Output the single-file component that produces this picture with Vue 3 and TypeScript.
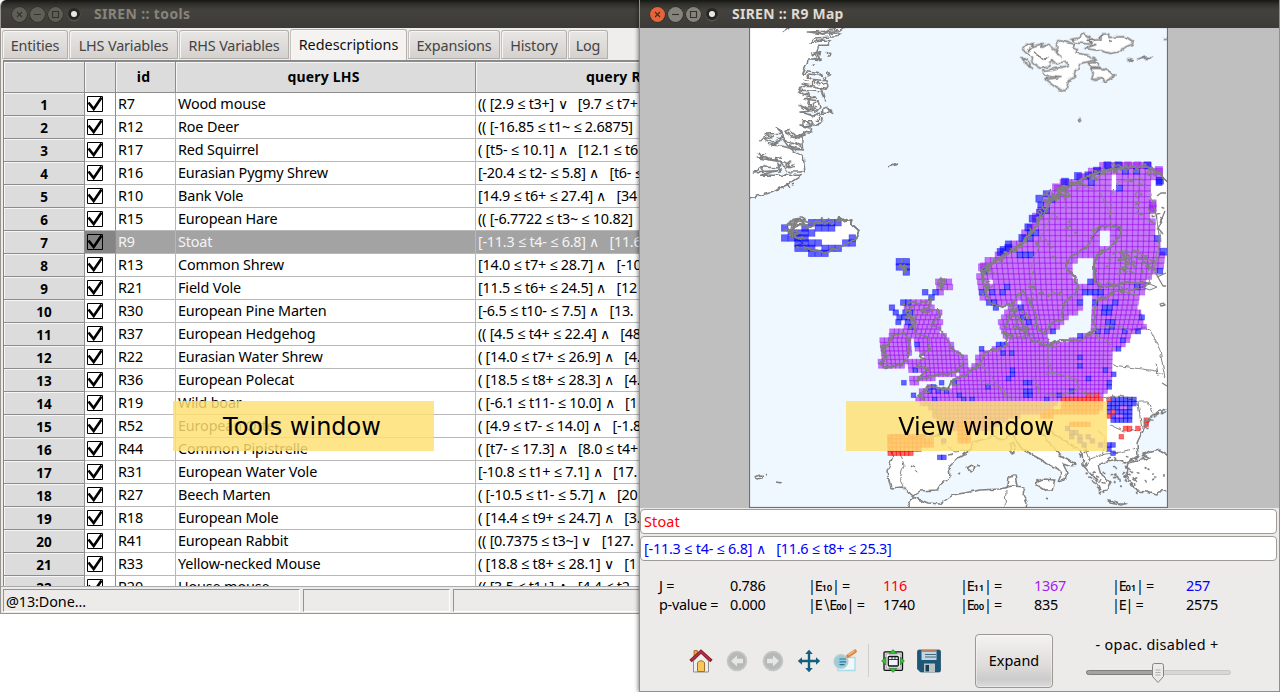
<script setup lang="ts">
type Pt = [number, number]
type Kind = 'p' | 'b' | 'r'
interface Cell { x: number; y: number; s: number; k: Kind }

const tabs = [
  { t: 'Entities', w: 66 }, { t: 'LHS Variables', w: 109 }, { t: 'RHS Variables', w: 110 },
  { t: 'Redescriptions', w: 117, on: true }, { t: 'Expansions', w: 92 }, { t: 'History', w: 66 }, { t: 'Log', w: 40 },
]

const rows: [string, string, string][] = [
  ['R7', 'Wood mouse', '(( [2.9 ≤ t3+] ∨   [9.7 ≤ t7+'],
  ['R12', 'Roe Deer', '(( [-16.85 ≤ t1~ ≤ 2.6875]'],
  ['R17', 'Red Squirrel', '( [t5- ≤ 10.1] ∧   [12.1 ≤ t6'],
  ['R16', 'Eurasian Pygmy Shrew', '[-20.4 ≤ t2- ≤ 5.8] ∧   [t6- ≤'],
  ['R10', 'Bank Vole', '[14.9 ≤ t6+ ≤ 27.4] ∧   [34'],
  ['R15', 'European Hare', '(( [-6.7722 ≤ t3~ ≤ 10.82]'],
  ['R9', 'Stoat', '[-11.3 ≤ t4- ≤ 6.8] ∧   [11.6'],
  ['R13', 'Common Shrew', '[14.0 ≤ t7+ ≤ 28.7] ∧   [-10'],
  ['R21', 'Field Vole', '[11.5 ≤ t6+ ≤ 24.5] ∧   [12'],
  ['R30', 'European Pine Marten', '[-6.5 ≤ t10- ≤ 7.5] ∧   [13.'],
  ['R37', 'European Hedgehog', '(( [4.5 ≤ t4+ ≤ 22.4] ∧   [48'],
  ['R22', 'Eurasian Water Shrew', '( [14.0 ≤ t7+ ≤ 26.9] ∧   [4.'],
  ['R36', 'European Polecat', '( [18.5 ≤ t8+ ≤ 28.3] ∧   [4.'],
  ['R19', 'Wild boar', '( [-6.1 ≤ t11- ≤ 10.0] ∧   [1'],
  ['R52', 'European Otter', '( [4.9 ≤ t7- ≤ 14.0] ∧   [-1.8'],
  ['R44', 'Common Pipistrelle', '( [t7- ≤ 17.3] ∧   [8.0 ≤ t4+'],
  ['R31', 'European Water Vole', '[-10.8 ≤ t1+ ≤ 7.1] ∧   [17.'],
  ['R27', 'Beech Marten', '( [-10.5 ≤ t1- ≤ 5.7] ∧   [20'],
  ['R18', 'European Mole', '( [14.4 ≤ t9+ ≤ 24.7] ∧   [3.'],
  ['R41', 'European Rabbit', '(( [0.7375 ≤ t3~] ∨   [127.'],
  ['R33', 'Yellow-necked Mouse', '( [18.8 ≤ t8+ ≤ 28.1] ∨   [1'],
  ['R20', 'House mouse', '(( [3.5 ≤ t1+] ∧   [4.4 ≤ t2'],
]

const rhsQuery = '[-11.3 ≤ t4- ≤ 6.8] ∧   [11.6 ≤ t8+ ≤ 25.3]'

// --- Map grid: squares shrink towards the south -------------------------
const stops: Pt[] = [[155, 5.7], [250, 5.5], [300, 5.1], [340, 4.3], [400, 4.15], [510, 4.1]]
function pitch(y: number): number {
  for (let i = 1; i < stops.length; i++) {
    if (y <= stops[i][0]) {
      const [a, p] = stops[i - 1], [b, q] = stops[i]
      return p + (q - p) * (y - a) / (b - a)
    }
  }
  return 4.1
}
function flat(ox: number, oy: number, s: number, a: number[]): Pt[] {
  const out: Pt[] = []
  for (let i = 0; i < a.length; i += 2) out.push([ox + a[i] / s, oy + a[i + 1] / s])
  return out
}
function inside(x: number, y: number, poly: Pt[]): boolean {
  let c = false
  for (let i = 0, j = poly.length - 1; i < poly.length; j = i++) {
    const [xi, yi] = poly[i], [xj, yj] = poly[j]
    if ((yi > y) !== (yj > y) && x < (xj - xi) * (y - yi) / (yj - yi) + xi) c = !c
  }
  return c
}

const purple: Pt[][] = [
  flat(0, 0, 1, [1108,163,1148,163,1150,168,1163,170,1163,178,1152,180,1149,192,1150,200,1157,200,1157,212,1149,215,1153,218,1153,234,1158,237,1158,247,1163,250,1163,263,1158,273,1152,278,1145,283,1145,296,1138,298,1138,312,1145,314,1145,328,1138,329,1133,333,1128,340,1123,348,1113,350,1113,375,1112,387,1107,392,1098,397,1070,397,1060,402,1045,412,1010,418,985,432,950,430,936,420,930,408,918,402,918,394,930,383,940,390,955,386,957,378,975,362,982,350,1005,347,1007,340,1000,332,1000,317,1007,308,1020,303,1020,301,1003,308,988,303,980,297,979,265,993,255,1007,245,1022,237,1034,215,1044,208,1046,193,1060,183,1077,176,1093,170]),
  flat(860, 240, 3, [160,180,215,180,215,205,245,205,245,250,235,255,245,280,270,305,285,320,290,335,320,350,320,375,300,400,240,410,150,435,150,418,190,400,150,390,150,360,190,355,165,325,165,290,135,275,130,230,130,190]),
  flat(860, 240, 3, [90,270,150,270,150,345,145,360,120,390,60,385,52,375,52,355,75,350,60,340,60,295,90,290]),
  flat(860, 240, 3, [232,110,270,110,270,145,250,160,230,155]),
]
const holes: Pt[][] = [
  flat(960, 150, 3, [415,243,458,243,458,280,435,290,415,285]),
  flat(960, 150, 3, [335,345,358,345,358,320,397,320,397,395,370,400,335,392]),
  flat(960, 150, 3, [450,75,470,75,470,115,450,115]),
  flat(0, 0, 1, [1083,294,1094,293,1092,333,1080,337,1062,342,1045,341,1052,332,1062,325,1068,318,1078,311,1084,305]),
  flat(860, 240, 3, [384,110,396,110,396,135,384,135]),
  flat(860, 240, 3, [150,300,165,325,165,352,150,352]),
]
const blueArea = [flat(1000, 300, 3, [320,288,415,288,400,325,400,370,345,370,320,355])]
const redArea = [
  flat(740, 380, 3, [446,165,560,170,590,190,520,212,510,230,446,230]),
  flat(1000, 300, 3, [185,286,310,286,300,340,120,350,130,335,180,330]),
  flat(1000, 300, 3, [205,370,275,370,275,382,205,382]),
  flat(740, 380, 3, [650,130,690,130,690,190,650,190]),
]
const blueDots: Pt[] = [
  ...flat(860, 240, 3, [96,203,130,190,145,190,110,212,130,212,145,215,115,228,130,232,115,245,140,250,150,258,200,160,220,160,218,175,168,318,172,390,136,428,162,463,215,438,245,425,205,450,230,450,280,425,262,452,230,475,295,462,312,474,338,475,370,330,412,318,430,318,425,335,460,340,458,395,458,408,448,415,390,440,505,428,505,455,503,465,388,190,410,205,478,200,495,225,505,240,440,148,425,162,368,95,368,155,425,35,440,20,480,50,500,50]),
  ...flat(960, 150, 3, [500,58,530,60,400,90,480,110,600,98,262,125,238,160,280,150,260,190,210,245,230,250,210,262,185,322,205,322,70,365,70,420,90,430,125,432,145,418,95,462,110,475,178,470,195,495,385,390,370,420,390,420,410,420,425,422,528,412,405,458,355,458,430,475,455,475,445,490,440,515,455,525,545,498,592,262,592,365]),
  ...flat(1000, 300, 3, [58,20,75,48,88,62,165,100,238,110,235,8,285,10,310,22,330,25,345,15,320,35,425,48,320,62,335,70,300,88,320,88,372,88,408,90,375,125,360,140,8,135,8,160,40,165,240,175,240,200,268,235,310,215,347,222,328,250,328,262,40,212,40,225,30,235,82,248,82,272,92,280,135,295,175,285,215,270,332,432,345,432,332,445,343,455,200,390,215,400,230,400,245,405,220,415,240,420,262,415,275,420,250,430,307,432]),
  ...flat(740, 380, 3, [600,235,613,235,615,185]),
]
const redDots: Pt[] = [
  ...flat(1000, 300, 3, [260,285,285,285,322,293,380,387,392,387,418,387,367,408,443,365,443,377,337,340,325,352]),
  ...flat(740, 380, 3, [540,213]),
]
const extraPurple: Pt[] = flat(1000, 300, 3, [370,320,383,325,355,347,370,342])

function near(x: number, y: number, p: number, list: Pt[]): boolean {
  return list.some(([a, b]) => Math.abs(a - x) <= p / 2 && Math.abs(b - y) <= p / 2)
}
const cells: Cell[] = []
for (let y = 165.5; y < 500; y += pitch(y)) {
  const p = pitch(y)
  for (let i = Math.floor(-210 / p); 1080 + i * p < 1164; i++) {
    const x = 1080 + i * p
    let k: Kind | '' = ''
    if (purple.some(q => inside(x, y, q)) && !holes.some(q => inside(x, y, q))) k = 'p'
    if (blueArea.some(q => inside(x, y, q))) k = 'b'
    if (redArea.some(q => inside(x, y, q))) k = 'r'
    if (near(x, y, p, extraPurple)) k = 'p'
    if (near(x, y, p, blueDots)) k = 'b'
    if (near(x, y, p, redDots)) k = 'r'
    if (k) cells.push({ x, y, s: p + 0.5, k })
  }
}
const iceland: [number, number[]][] = [
  [608, [215, 235, 255, 275, 294]], [624, [134, 195, 235, 255, 275]], [639, [154, 174, 195, 215]],
  [654, [134, 154, 174, 195, 337]], [669, [174, 195, 215, 235, 317, 337]], [685, [174, 195, 215, 255, 275, 295]],
  [700, [215, 235, 255]],
]
for (const [y, xs] of iceland) for (const x of xs) cells.push({ x: 740 + x / 3, y: 20 + y / 3, s: 6.5, k: 'b' })
for (const [x, y] of flat(860, 240, 3, [118,65,139,65,118,81,139,81,139,96])) cells.push({ x, y, s: 6.5, k: 'b' })
// larger squares along the Arctic coast
for (const [x, y] of flat(960, 150, 3, [442,46,475,46,562,46,411,62,354,78,385,76,315,95,600,92,238,146,187,264,145,294,122,306,205,232,240,188,218,206,610,305]))
  cells.push({ x, y, s: 7, k: 'b' })
for (const [x, y] of flat(960, 150, 3, [504,46,533,46,597,60,288,112,578,160,578,176,66,352])) cells.push({ x, y, s: 7, k: 'p' })

const kinds: Kind[] = ['p', 'b', 'r']
const groups = kinds.map(k => ({ k, list: cells.filter(c => c.k === k) }))

// --- Rugged coast: short jittered strokes around fjord and archipelago areas
let seed = 11
function rnd(): number { seed = (seed * 16807) % 2147483647; return seed / 2147483647 }
function scribble(line: number[], spread: number, n: number, len = 5): string {
  const pts = flat(0, 0, 1, line)
  let d = ''
  for (let i = 0; i < pts.length - 1; i++) {
    for (let j = 0; j < n; j++) {
      const t = rnd()
      let x = pts[i][0] + (pts[i + 1][0] - pts[i][0]) * t + (rnd() - .5) * spread
      let y = pts[i][1] + (pts[i + 1][1] - pts[i][1]) * t + (rnd() - .5) * spread
      d += `M${x.toFixed(1)} ${y.toFixed(1)}`
      for (let m = 0; m < 3; m++) {
        x += (rnd() - .5) * len; y += (rnd() - .5) * len * .8
        d += `L${x.toFixed(1)} ${y.toFixed(1)}`
      }
    }
  }
  return d
}
const rough = [
  scribble([1160,174,1140,166,1120,168,1103,172,1085,179,1070,185,1058,192], 7, 14),
  scribble([1060,188,1050,200,1042,212,1035,228,1022,244,1008,254], 3, 12),
  scribble([1070,195,1044,197], 9, 26),
  scribble([1005,256,990,264,984,275], 4, 12),
  scribble([985,270,987,293], 7, 24),
  scribble([1115,255,1150,258], 10, 18, 7),
  scribble([1112,266,1155,266], 16, 50, 5),
  scribble([1135,180,1140,220], 8, 8, 6),
  scribble([1150,225,1163,205], 10, 9),
  scribble([908,308,914,326], 9, 26),
  scribble([882,345,886,366], 4, 8),
  scribble([903,262,905,272], 3, 6),
  scribble([940,281,943,286], 4, 8),
  scribble([1013,325,1032,330], 24, 34, 5),
  scribble([1005,315,1015,312], 10, 12),
  scribble([1100,286,1145,283], 4, 9),
  scribble([1088,470,1100,490], 10, 14, 4),
  scribble([1106,464,1128,484], 18, 20, 4),
  scribble([1127,465,1135,490], 9, 15, 4),
  scribble([1128,458,1150,455], 5, 12, 4),
  scribble([1145,425,1150,418,1166,409], 4, 9, 4),
  scribble([1082,448,1086,468], 5, 10, 4),
  scribble([1140,470,1165,480], 16, 9, 3),
  scribble([1060,215,1075,235], 16, 7, 5),
  scribble([1035,240,1055,258], 14, 7, 5),
  scribble([1020,290,1055,296], 16, 14, 6),
  scribble([1042,342,1060,345], 5, 8, 4),
  scribble([920,395,960,382], 5, 8, 4),
  scribble([788,224,806,222], 10, 16, 6),
  scribble([790,234,804,238], 8, 10, 6),
  scribble([810,222,836,220], 4, 10, 5),
].join('')
const fjords = [
  scribble([812,30,836,32], 7, 5, 8),
  scribble([818,50,806,74], 4, 4, 6),
  scribble([806,80,822,84], 6, 6, 7),
  scribble([800,92,815,112], 8, 8, 8),
  scribble([804,118,822,120], 8, 5, 8),
  scribble([770,138,800,140], 12, 10, 9),
  scribble([760,158,802,168], 12, 10, 9),
  scribble([776,192,800,178], 2, 6, 4),
  scribble([1028,48,1050,66], 8, 5, 6),
  scribble([1080,38,1120,42], 4, 5, 5),
].join('')
</script>

<template>
  <div class="desk">
    <section class="win tools">
      <header class="title dim">
        <i class="btn"><svg viewBox="0 0 15 15"><path d="M5 5l5 5M10 5l-5 5" /></svg></i>
        <i class="btn"><svg viewBox="0 0 15 15"><path d="M4 7.5h7" /></svg></i>
        <i class="btn"><svg viewBox="0 0 15 15"><path d="M4.5 4.5h6v6h-6z" /></svg></i>
        <i class="dot"></i>
        <span>SIREN :: tools</span>
      </header>
      <nav class="tabs">
        <div v-for="t in tabs" :key="t.t" class="tab" :class="{ on: t.on }" :style="{ width: t.w + 'px' }"><span>{{ t.t }}</span></div>
      </nav>
      <div class="grid">
        <div class="row head"><b></b><b></b><b>id</b><b>query LHS</b><b class="last">query RHS</b></div>
        <div v-for="(r, i) in rows" :key="r[0]" class="row" :class="{ sel: i === 6 }">
          <b>{{ i + 1 }}</b>
          <div class="ck"><svg viewBox="0 0 16 16"><path d="M.5 .5h15v15H.5z" /><path class="tk" d="M1.5 6.5l5.2 6.500L14.500 1.500" /></svg></div>
          <div>{{ r[0] }}</div><div>{{ r[1] }}</div><div class="q">{{ r[2] }}</div>
        </div>
      </div>
      <footer class="status"><div>@13:Done...</div><div></div><div></div></footer>
    </section>

    <section class="win view">
      <header class="title">
        <i class="btn x"><svg viewBox="0 0 15 15"><path d="M5 5l5 5M10 5l-5 5" /></svg></i>
        <i class="btn"><svg viewBox="0 0 15 15"><path d="M4 7.5h7" /></svg></i>
        <i class="btn"><svg viewBox="0 0 15 15"><path d="M4.5 4.5h6v6h-6z" /></svg></i>
        <i class="dot"></i>
        <span>SIREN :: R9 Map</span>
      </header>
      <div class="canvas">
        <svg class="map" viewBox="749 28 419 480">
          <defs>
            <filter id="rugged" filterUnits="userSpaceOnUse" x="740" y="20" width="440" height="500" color-interpolation-filters="sRGB">
              <feTurbulence type="fractalNoise" baseFrequency=".2" numOctaves="1" seed="4" />
              <feDisplacementMap in="SourceGraphic" scale="5" xChannelSelector="R" yChannelSelector="G" />
            </filter>
          </defs>
          <rect x="749" y="28" width="419" height="480" fill="#eff7ff" />
          <g class="land" filter="url(#rugged)">
            <g transform="translate(740 20) scale(.33333)">
              <path d="M10 10L320 10L312 24L300 32L205 36L250 42L304 38L290 50L222 54L210 68L240 60L275 62L262 76L235 76L230 100L238 110L230 118L204 116L202 130L196 140L185 165L192 166L200 152L240 158L245 166L205 162L205 172L215 178L258 182L264 198L258 208L220 200L186 192L220 202L180 205L174 212L190 222L228 232L190 236L232 242L240 262L230 274L208 268L180 256L210 274L180 276L210 284L230 285L250 295L245 308L215 318L180 315L218 327L212 340L190 335L195 346L170 348L145 328L135 334L160 350L185 354L188 390L165 388L140 370L120 330L106 322L125 340L75 342L100 352L72 356L95 366L120 362L96 376L125 378L150 385L190 410L194 452L185 456L145 455L120 424L90 418L55 400L72 412L55 414L112 424L118 444L60 440L40 456L110 452L62 466L184 466L145 492L100 516L30 534L10 538z" />
              <path d="M160 598L180 596L200 625L230 608L260 612L280 600L296 605L300 592L318 604L338 600L335 612L357 632L345 660L320 670L290 685L250 697L225 690L200 686L168 680L190 668L150 650L185 640L138 630L165 622L150 608z" />
              <path d="M178 210l20 -14 28 2 22 12 9 30 -10 -24zM248 266l14 -4 10 10 -12 8 -12 0zM268 272l12 6M262 100l10 0 0 8 -8 0zM262 160l8 -2 2 6 -8 4zM446 440l24 -11 0 5zM190 302l25 0 3 12 -30 4zM132 362l48 10 4 16 -40 -10zM128 38l20 -14M232 96l10 2 -2 6zM230 114l10 2 0 6z" />
            </g>
            <g transform="translate(960 20) scale(.33333)">
              <path d="M200 75L220 70L214 80L250 70L244 82L265 72L280 84L300 112L290 86L290 65L305 62L345 74L336 84L352 88L348 98L385 106L410 120L370 128L356 132L360 145L345 152L342 175L325 182L318 212L295 208L255 178L300 172L254 168L248 152L285 146L325 136L316 124L288 132L275 118L270 138L240 145L215 125L218 112L195 96L188 86z" />
              <path d="M332 58L355 54L370 41L390 50L385 60L425 60L428 42L446 42L446 52L490 50L520 62L518 72L498 80L480 94L450 100L420 92L375 85L410 74L345 68zM395 145L425 145L440 152L465 165L452 176L432 185L430 176L395 178L400 160zM385 130L405 127L422 142L392 140zM185 112L205 125L217 144L195 130zM506 118l12 4 -4 4zM536 116l20 -5 18 3 -18 1zM352 302l6 -5 4 5 -5 4zM610 58l14 0" />
            </g>
            <path d="M1178 186L1168 182L1158 172L1145 166L1120 168L1100 171L1080 180L1067 188L1055 197L1045 212L1035 228L1020 245L1005 255L990 264L983 275L986 295L993 304L1002 307L1013 304L1022 290L1029 300L1036 315L1038 330L1045 334L1050 323L1062 320L1064 303L1078 290L1074 276L1066 268L1069 258L1085 248L1092 240L1100 227L1116 226L1122 233L1110 248L1097 255L1094 265L1097 285L1105 287L1130 282L1150 283L1140 288L1115 292L1098 300L1094 312L1095 330L1080 341L1060 340L1048 346L1032 341L1024 330L1020 318L1010 316L1004 330L1008 345L995 350L985 352L980 364L965 376L952 380L948 390L930 386L918 396L930 404L942 420L940 436L890 436L888 446L893 456L887 472L891 488L903 487L913 496L920 491L937 490L941 484L950 477L949 467L958 458L970 451L973 442L993 437L1003 440L1012 433L1018 443L1025 451L1040 459L1050 465L1058 469L1062 473L1058 482L1064 480L1067 472L1063 464L1072 467L1075 463L1060 455L1048 441L1040 430L1046 425L1055 435L1070 445L1082 452L1083 465L1088 471L1096 480L1100 492L1107 490L1110 482L1101 475L1098 465L1107 462L1117 460L1125 463L1138 456L1137 443L1143 430L1150 418L1160 410L1178 409z" />
            <path d="M1178 455L1168 455L1160 450L1143 454L1150 458L1128 463L1127 467L1126 478L1131 482L1137 491L1147 492L1157 495L1159 491L1178 490zM1008 478l7 -3 2 11 -3 7 -6 1 -1 -8zM1010 444l4 -1 1 10 -4 1zM1035 482l8 -3 12 1 -3 11 -5 0 -10 -6zM1109 500l10 3 8 0 -6 2 -11 -2zM755 477l6 -2 2 2 -5 2zM766 475l2 1M776 482l5 1M967 468l5 -3 3 3 -4 3zM976 465l4 1M958 473l2 1M911 466l4 2M915 470l3 2M948 455l5 -1M1046 497l2 1" />
            <path d="M903 518L910 502L913 497L928 503L940 504L953 495L980 490L1000 489L1013 486L1025 487L1023 495L1027 502L1025 518z" />
            <g transform="translate(860 240) scale(.33333)">
              <path d="M150 185L185 190L215 180L205 200L183 215L235 210L240 225L215 255L235 262L255 290L275 325L305 345L310 365L300 385L265 402L210 406L165 425L190 400L207 388L170 378L192 355L182 345L210 330L205 295L180 285L165 275L160 240L140 220L135 200zM95 285L130 280L148 300L145 350L125 372L75 385L60 370L80 350L65 320L85 315z" />
            </g>
            <path class="fine" :d="fjords" />
          </g>
          <path class="lake" d="M1141 287l9 -3 7 3 -7 3z" />
          <g class="border" filter="url(#rugged)">
            <path d="M1142 322L1140 310M1113 365L1135 368L1157 371L1165 378L1160 350L1150 330L1144 328L1130 330M905 488L900 478L904 465L900 453M1110 425L1125 432L1140 430M1088 460L1100 455L1120 452L1137 448M1005 508L1006 490M1085 445L1090 460L1084 468M1120 396L1138 402L1148 402L1155 418M1138 402L1142 430M1156 362L1158 376M1098 430L1106 440L1102 455" />
          </g>
          <g v-for="g in groups" :key="g.k" :class="['cell', g.k]">
            <rect v-for="(c, i) in g.list" :key="i" :x="c.x - c.s / 2" :y="c.y - c.s / 2" :width="c.s" :height="c.s" />
          </g>
          <g class="border" filter="url(#rugged)">
            <path d="M1113 226L1108 210L1100 192L1085 186L1075 190M1056 210L1046 225L1038 245L1033 262L1032 285L1030 292M1110 224L1112 190L1120 182L1140 178L1150 190L1156 215L1160 240L1156 262L1148 282M1100 300L1118 292L1138 295M1094 330L1110 325L1130 330M1113 348L1105 340L1094 335M1048 345L1048 360L1052 373L1033 378L1040 392L1060 396L1080 388L1074 378L1052 373M980 363L990 375L1000 390L1015 402M968 372L982 382L1005 390L1003 400M1112 396L1135 398M1082 392L1100 398L1120 396M940 442L955 452L970 450" />
          </g>
          <g class="coast" filter="url(#rugged)">
            <g transform="translate(740 20) scale(.33333)" class="k3">
              <path d="M150 608L180 596L200 625L230 608L260 612L280 600L296 605L300 592L318 604L338 600L335 612L357 632L345 660L320 670L290 685L250 697L225 690L200 686L168 680M160 605l20 10 -20 10 -25 5 50 8 -40 10 40 8M150 630l30 -20 14 8" />
            </g>
            <path d="M1178 186L1168 182L1158 172L1145 166L1120 168L1100 171L1080 180L1067 188L1055 197L1045 212L1035 228L1020 245L1005 255L990 264L983 275L986 295L993 304L1002 307L1013 304L1022 290L1029 300L1036 315L1038 330L1045 334L1050 323L1062 320L1064 303L1078 290L1074 276L1066 268L1069 258L1085 248L1092 240L1093 230L1103 226L1120 227L1122 233L1110 248L1097 255L1094 265L1095 282L1105 287L1130 282L1144 283M1140 288L1115 292L1098 300L1094 312L1095 330L1080 341L1060 340L1048 346L1032 341L1024 330L1020 318L1010 316L1004 330L1008 345L995 350L985 352L980 364L965 376L952 380L948 390L930 386L918 396L930 404L942 420L940 436" />
            <g transform="translate(860 240) scale(.33333)" class="k3">
              <path d="M150 185L185 190L215 180L205 200L183 215L235 210L240 225L215 255L235 262L255 290L275 325L305 345L310 365L300 385L265 402L210 406L165 425L190 400L207 388L170 378L192 355L182 345L210 330L205 295L180 285L165 275L160 240L140 220L135 200zM95 285L130 280L148 300L145 350L125 372L75 385L60 370L80 350L65 320L85 315zM120 75l14 2 0 18 -4 -12zM240 125l14 -8 -8 22 -2 12zM205 172l12 6" />
            </g>
          </g>
          <g class="coast thin">
            <path :d="rough" />
            <path d="M1157 196l4 -3 5 0M1160 304l3 -1 2 2 -4 1zM1162 222l-4 6 5 6M1155 272l8 14 3 0M1157 277l9 -4M1160 223l5 -12M1162 383l5 3" />
          </g>
          <rect class="frame" x="749.5" y="27.5" width="418" height="480" />
        </svg>
      </div>
      <div class="fields"><div class="field red">Stoat</div><div class="field blue">{{ rhsQuery }}</div></div>
      <div class="stats">
        <span>J =</span><span>0.786</span><span class="e">|E<small>10</small>| =</span><span class="red">116</span><span class="e">|E<small>11</small>| =</span><span class="pur">1367</span><span class="e">|E<small>01</small>| =</span><span class="blue">257</span>
        <span>p-value =</span><span>0.000</span><span class="e">|E∖E<small>00</small>| =</span><span>1740</span><span class="e">|E<small>00</small>| =</span><span>835</span><span class="e">|E| =</span><span>2575</span>
      </div>
      <div class="bar">
        <div class="icons">
          <svg viewBox="0 0 24 24"><path d="M5 1.5h3.4v8H5z" fill="#e8a93c" stroke="#9a4b20" stroke-width=".7" /><path d="M4.5 12L12 4l7.500 8v11h-15z" fill="#eee" stroke="#777" stroke-width=".8" /><path d="M8.500 22.500v-9q3.500-3.500 7 0v9z" fill="#fbc65a" stroke="#a5702a" stroke-width="1" /><path d="M1.500 12L12 2.600 22.500 12" fill="none" stroke="#8e1a2c" stroke-width="3.400" /><path d="M2.500 11L12 2.500l9.500 8.500" fill="none" stroke="#b8384a" stroke-width="1.200" /></svg>
          <svg viewBox="0 0 24 24"><circle cx="12" cy="12" r="10.300" fill="#c3c6c4" /><circle cx="12" cy="12" r="8.500" fill="#b5b9b7" /><path d="M6 12l6-5.500v3.300h6v4.400h-6v3.300z" fill="#e6e7e5" /></svg>
          <svg viewBox="0 0 24 24"><circle cx="12" cy="12" r="10.300" fill="#c3c6c4" /><circle cx="12" cy="12" r="8.500" fill="#b5b9b7" /><path d="M18 12l-6-5.500v3.300H6v4.400h6v3.300z" fill="#e6e7e5" /></svg>
          <svg viewBox="0 0 24 24"><path d="M12 .8l3.800 4.200h-2.600v5.800h5.800V8.200l4.200 3.800-4.200 3.800v-2.600h-5.800v5.800h2.600L12 23.200 8.200 19h2.600v-5.800H5v2.600L.8 12 5 8.200v2.600h5.800V5H8.200z" fill="#145f80" /></svg>
          <svg viewBox="0 0 24 24"><path d="M5 8.500h17v13H5z" fill="#f2f8fa" stroke="#a6dbe8" stroke-width="1.300" /><circle cx="8" cy="12.500" r="6.800" fill="#9ccbdc" stroke="#b8ccd0" stroke-width="1.500" /><path d="M6.500 10h6.500M6.500 12.800h6.500M6.500 15.600h5" stroke="#24788e" stroke-width="1.200" /><path d="M15 7l7-4.800" stroke="#d98544" stroke-width="3.600" stroke-linecap="round" /><path d="M15.500 6l6-4.200" stroke="#f5c083" stroke-width="1.200" /></svg>
          <i class="sep"></i>
          <svg viewBox="0 0 24 24"><rect x="3" y="2.800" width="18.500" height="18.500" rx="1" fill="#ddd" stroke="#111" stroke-width="1.300" /><rect x="5.200" y="5" width="14" height="14" fill="#f7f7f7" stroke="#999" stroke-width=".7" /><rect x="7.300" y="7.500" width="10" height="9.500" rx="1" fill="#eef3f9" stroke="#111" stroke-width="1.300" /><path d="M8 10.500h9M11 8v2.500M14 8v2.500" stroke="#111" stroke-width=".8" /><path d="M12 .6l4 4H8zM12 23.400l4-4H8zM.6 12l4-4v8zM23.400 12l-4-4v8z" fill="#2fc435" stroke="#14611a" stroke-width=".5" /></svg>
          <svg viewBox="0 0 24 24"><path d="M2 1h20q1.500 0 1.500 1.500v19q0 1.500-1.500 1.500H3.500L.5 20V2.500Q.5 1 2 1z" fill="#1b5878" stroke="#174560" stroke-width=".7" /><path d="M4.500 1.500h15v9.500h-15z" fill="#c3d6e2" /><path d="M4.500 1.300h15v1.600h-15z" fill="#d8763a" /><path d="M8 5.500h11M8 8h11" stroke="#234c63" stroke-width=".8" /><path d="M7 14.500h11V23H7z" fill="#b9c3c7" /><path d="M8.500 16h3.500v6.500H8.500z" fill="#1b3d50" /></svg>
        </div>
        <button>Expand</button>
        <div class="opac"><span>- opac. disabled +</span>
          <svg viewBox="0 0 148 24"><rect x="1.500" y="9.500" width="144" height="4" rx="2" fill="#d9d7d4" stroke="#c9c7c4" /><rect x="1.500" y="9.500" width="72" height="4" rx="2" fill="#a5a39f" stroke="#807e7a" /><path d="M67.500 4.500q0-2 2-2h7q2 0 2 2v11l-5.500 6-5.500-6z" fill="#eceae8" stroke="#86847f" /><path d="M70.500 9h5M70.500 11.500h5M70.500 14h5" stroke="#a9a7a3" stroke-width=".9" /></svg>
        </div>
      </div>
    </section>
    <div class="note n1">Tools window</div>
    <div class="note n2">View window</div>
  </div>
</template>

<style>
body { margin: 0; background: #fff; overflow: hidden; }
</style>
<style scoped>
* { box-sizing: border-box; }
.desk { position: relative; width: 1280px; height: 692px; overflow: hidden; background: #fff; font: 14.4px/20px "Noto Sans", "Open Sans", sans-serif; color: #000; letter-spacing: -.15px; }
.win { position: absolute; top: 0; background: #edebe9; overflow: hidden; display: flex; flex-direction: column; }
.tools { left: 0; width: 640px; height: 614px; border: 1px solid #989591; border-top: 0; border-radius: 6px 0 0 0; }
.view { left: 639px; width: 641px; height: 692px; border: 1px solid #918f8b; border-top: 0; box-shadow: -1px 0 4px #0007; }
.title { flex: none; height: 28px; margin: 0 -1px; background: linear-gradient(#171715, #302f2b 4px, #43423d 10px, #3c3b37); display: flex; align-items: center; padding-left: 11px; color: #e0dbd1; font-weight: bold; font-size: 13.9px; letter-spacing: .3px; }
.title.dim { color: #87857c; padding-left: 12px; letter-spacing: .4px; }
.btn { width: 15px; height: 15px; margin-right: 3px; border-radius: 50%; background: #85837b; display: block; box-shadow: 0 0 0 .5px #2b2a27; }
.dim .btn { background: #5f5e57; }
.btn svg { display: block; width: 15px; fill: none; stroke: #33322e; stroke-width: 1.1; }
.btn.x { background: #e8623a; }
.dot { width: 6px; height: 6px; border-radius: 50%; background: #e9e8e3; box-shadow: 0 0 0 3px #282724, 0 1px 0 3.5px #55544e; margin: 0 17px 0 5px; }
.tabs { flex: none; height: 32px; padding: 2px 0 0 1px; display: flex; align-items: flex-end; background: #efeeec; }
.tab { flex: none; height: 29px; margin-bottom: 1px; border: 1px solid #b3b0ac; border-left-color: #c3c0bd; border-radius: 3px 3px 0 0; background: linear-gradient(#e9e7e5, #d4d1ce); color: #444; text-align: center; padding-top: 5px; white-space: nowrap; box-shadow: inset 1px 1px #f7f6f5; }
.tab + .tab { margin-left: 1px; }
.tab.on { height: 31px; background: #f4f3f2; color: #111; border-bottom: 0; margin-bottom: 0; letter-spacing: 0; }
.grid { flex: none; height: 526px; overflow: hidden; margin-left: 2px; border-left: 1px solid #858585; border-top: 2px solid #8a8a8a; background: #fff; }
.row { display: grid; grid-template-columns: 81px 31px 60px 300px 164px; height: 23px; }
.row > * { border-right: 1px solid #b8b8b8; border-bottom: 1px solid #b8b8b8; height: 23px; padding-left: 2px; white-space: pre; overflow: hidden; line-height: 21px; }
.row > b { background: #dcdcdc; border-color: #8c8c8c; text-align: center; box-shadow: inset 1px 1px #f6f6f6; line-height: 24px; padding: 0; font-size: 13.5px; letter-spacing: 0; }
.row.head, .row.head > b { height: 31px; line-height: 29px; font-size: 14px; }
.row.head > b { padding-right: 4px; letter-spacing: .2px; }
.row.head > b.last { text-align: left; padding: 0 0 0 110px; }
.row .q { letter-spacing: -.25px; border-right: 0; }
.row .ck { padding: 3px 0 0 2px; border-right-color: #8c8c8c; }
.ck svg { width: 16px; height: 16px; display: block; fill: none; stroke: #000; }
.ck .tk { stroke-width: 2.6; }
.row.sel > div { background: #a3a3a3; color: #f4f4f4; }
.row.sel .ck { background: #858585; }
.status { flex: none; height: 27px; border-top: 1px solid #aaa; background: #edebe9; display: flex; gap: 3px; padding: 2px 0 1px 2px; }
.status div { width: 297px; height: 23px; border: 1px solid #959390; border-right-color: #fff; border-bottom-color: #fff; padding-left: 2px; line-height: 24px; flex: none; letter-spacing: -.1px; }
.status div + div { width: 147px; }
.status div + div + div { width: 200px; }
.canvas { flex: none; height: 480px; background: #bfbfbf; display: flex; padding-left: 109px; }
.map { width: 419px; height: 480px; display: block; overflow: hidden; }
.land { fill: #fff; stroke: #808080; stroke-width: 1.5; stroke-linejoin: round; }
.land g { stroke-width: 4.5; }
.land .fine { fill: none; stroke-width: 1.3; }
.lake { fill: #eff7ff; stroke: #808080; }
.border { fill: none; stroke: #868686; stroke-width: 1; }
.coast { fill: none; stroke: #808080; stroke-width: 2; stroke-linejoin: round; }
.coast.thin { stroke-width: 1.3; }
.k3 { stroke-width: 5.4; }
.frame { fill: none; stroke: #707070; stroke-width: 1.2; }
.cell { fill-opacity: .6; stroke-opacity: .45; stroke-width: .8; }
.cell.p { fill: #a020f0; stroke: #a020f0; }
.cell.b { fill: #00f; stroke: #00f; }
.cell.r { fill: #f00; stroke: #f00; }
.fields { padding: 1px 2px 0 0; display: flex; flex-direction: column; gap: 2px; flex: none; }
.field { height: 25px; background: #fff; border: 1px solid #9f9c98; border-radius: 4px; padding-left: 3px; line-height: 24px; white-space: pre; }
.red { color: #f00; } .blue { color: #00f; } .pur { color: #a020f0; }
.field.red { letter-spacing: .15px; }
.field.blue { letter-spacing: -.22px; }
.stats { flex: none; margin: 15px 0 0 19px; display: grid; grid-template-columns: 71px 80px 73px 79px 72px 80px 72px 60px; grid-auto-rows: 19px; line-height: 20px; white-space: nowrap; letter-spacing: -.25px; }
.stats .e { letter-spacing: -1.2px; margin-left: -2px; word-spacing: .8px; }
.stats small { font-size: 9.5px; font-weight: 600; letter-spacing: -.2px; }
.bar { display: flex; height: 78px; padding-top: 20px; }
.icons { width: 335px; display: flex; padding: 15px 0 0 49px; gap: 12px; }
.icons svg { width: 24px; height: 24px; flex: none; }
.sep { width: 1px; height: 33px; margin: -5px 0 0 -1px; background: #d0cecb; }
button { flex: none; width: 78px; height: 54px; border: 1px solid #9c9995; border-radius: 4px; background: linear-gradient(#f4f3f2, #dedcda 60%, #cbcbcb 85%, #dcdcdc); font: inherit; padding: 0; box-shadow: inset 0 0 0 1px #fff6; }
.opac { width: 148px; margin-left: 32px; text-align: center; padding-top: 1px; }
.opac span { display: block; letter-spacing: .3px; white-space: nowrap; padding-right: 4px; }
.opac svg { width: 148px; height: 24px; display: block; margin-top: 6px; }
.note { position: absolute; top: 401px; width: 261px; height: 50px; background: rgba(254, 224, 114, .83); text-align: center; font: 24px/52px "DejaVu Sans", sans-serif; letter-spacing: 0; }
.n1 { left: 173px; padding-right: 3px; }
.n2 { left: 846px; padding-right: 1px; }
</style>
